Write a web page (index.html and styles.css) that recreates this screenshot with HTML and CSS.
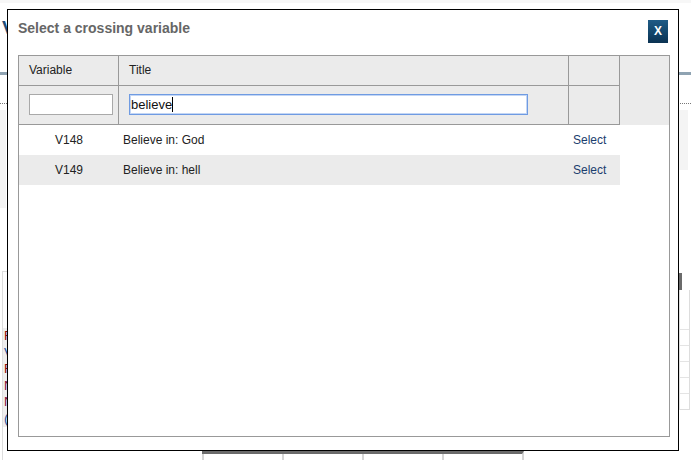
FILE: index.html
```html
<!DOCTYPE html>
<html lang="en">
<head>
<meta charset="utf-8">
<title>Select a crossing variable</title>
<link rel="stylesheet" href="styles.css">
</head>
<body>
<div class="page">
  <h1 class="page-title">V</h1>
  <div class="page-rule"></div>
  <div class="page-dots"></div>
  <div class="page-cols">
    <div class="col-left">
      <div class="soft-box tall"></div>
      <div class="legend">
        <div class="legend-list">
          <span class="lg red">R</span>
          <span class="lg blue">V</span>
          <span class="lg red">R</span>
          <span class="lg plum">N</span>
          <span class="lg plum">N</span>
          <span class="lg blue">(</span>
        </div>
      </div>
    </div>
    <div class="col-right">
      <div class="soft-box short"></div>
      <div class="dark-block"></div>
      <div class="mini-table">
        <div class="mini-row big"></div>
        <div class="mini-row"></div>
        <div class="mini-row"></div>
        <div class="mini-row"></div>
        <div class="mini-row"></div>
        <div class="mini-row"></div>
      </div>
    </div>
  </div>
  <div class="axis">
    <span class="tick"></span><span class="tick"></span><span class="tick"></span><span class="tick"></span>
  </div>
</div>

<div class="dialog">
  <div class="dialog-head">
    <h2 class="dialog-title">Select a crossing variable</h2>
    <button class="close-btn" type="button">X</button>
  </div>
  <div class="picker">
    <div class="picker-main">
      <div class="thead">
        <div class="th">Variable</div>
        <div class="th">Title</div>
        <div class="th"></div>
        <div class="th filter"><input class="filter-input small" type="text"></div>
        <div class="th filter"><span class="caret-wrap"><input class="filter-input wide" type="text" value="believe"></span></div>
        <div class="th filter"></div>
      </div>
      <div class="trow">
        <div class="td code">V148</div>
        <div class="td">Believe in: God</div>
        <div class="td"><a class="select-link" href="#">Select</a></div>
      </div>
      <div class="trow alt">
        <div class="td code">V149</div>
        <div class="td">Believe in: hell</div>
        <div class="td"><a class="select-link" href="#">Select</a></div>
      </div>
    </div>
    <div class="picker-gutter"></div>
  </div>
</div>
</body>
</html>
```
FILE: styles.css
```css
html, body {
  margin: 0;
  padding: 0;
  background: #fff;
  overflow: hidden;
}

body {
  font-family: "Liberation Sans", Arial, sans-serif;
  width: 691px;
  height: 460px;
}

/* ---------- background page ---------- */
.page {
  height: 460px;
  box-sizing: border-box;
  border-top: 3px solid #f7f7f7;
  display: flex;
  flex-direction: column;
}

.page-title {
  margin: 15px 0 0 2px;
  font-size: 19px;
  line-height: 20px;
  font-weight: bold;
  color: #1f4e79;
  white-space: nowrap;
}

.page-rule {
  margin-top: 34px;
  height: 3px;
  background: #8fa3b2;
}

.page-dots {
  margin-top: 28px;
  border-top: 1px dotted #777;
}

.page-cols {
  flex: none;
  height: 300px;
  margin-top: 6px;
  display: flex;
  justify-content: space-between;
  align-items: flex-start;
}

.col-left {
  width: 8px;
}

.col-right {
  width: 12px;
}

.soft-box {
  background: #f4f4f4;
}

.soft-box.tall {
  height: 98px;
  width: 6px;
}

.soft-box.short {
  height: 60px;
  width: 9px;
}

.legend {
  margin: 63px 0 0 2px;
  border-left: 1px solid #ddd;
  border-top: 1px solid #ddd;
  height: 200px;
  padding-top: 56px;
  box-sizing: border-box;
}

.legend-list {
  display: flex;
  flex-direction: column;
  background: #eee;
  overflow: hidden;
}

.lg {
  display: block;
  height: 16.5px;
  line-height: 16px;
  font-size: 13px;
  padding-left: 1px;
}

.lg.red { color: #8b0a0a; }
.lg.blue { color: #1f4e9a; }
.lg.plum { color: #7a0a3a; }

.dark-block {
  margin-top: 103px;
  width: 3px;
  height: 17px;
  background: #6b6b6b;
}

.mini-table {
  width: 9px;
  border: 1px solid #ddd;
  border-top: none;
}

.mini-row {
  height: 15px;
  border-top: 1px solid #e4e4e4;
}

.mini-row.big {
  height: 39px;
  border-top: none;
}

.axis {
  margin-top: auto;
  margin-left: 202px;
  width: 320px;
  border-top: 3px solid #6b6b6b;
  display: grid;
  grid-template-columns: repeat(4, 80px);
  height: 6px;
  border-right: 2px solid #d6d6d6;
}

.tick {
  border-left: 2px solid #d6d6d6;
}

/* ---------- dialog ---------- */
.dialog {
  position: absolute;
  left: 7px;
  top: 9px;
  width: 672px;
  height: 442px;
  box-sizing: border-box;
  border: 1px solid #000;
  background: #fff;
  padding: 0 8px 13px 10px;
  display: flex;
  flex-direction: column;
}

.dialog-head {
  height: 45px;
  flex: none;
  display: flex;
  justify-content: space-between;
  align-items: flex-start;
  padding-top: 10px;
  box-sizing: border-box;
}

.dialog-title {
  margin: 0;
  font-size: 14px;
  line-height: 16px;
  font-weight: bold;
  color: #666;
}

.close-btn {
  margin: 0 2px 0 0;
  padding: 0;
  width: 20px;
  height: 23px;
  border: none;
  background: linear-gradient(to bottom, #1f5b86 0%, #154a70 45%, #0b3252 100%);
  color: #fff;
  font-family: "Liberation Sans", Arial, sans-serif;
  font-size: 12px;
  font-weight: bold;
  line-height: 23px;
  text-align: center;
  cursor: pointer;
}

.picker {
  flex: 1;
  border: 1px solid #999;
  display: flex;
  align-items: flex-start;
  min-height: 0;
}

.picker-main {
  width: 601px;
  flex: none;
}

.picker-gutter {
  flex: 1;
  height: 69px;
  background: #ebebeb;
}

.thead {
  display: grid;
  grid-template-columns: 100px 450px 51px;
  grid-template-rows: 30px 39px;
}

.th {
  background: #ebebeb;
  border-right: 1px solid #999;
  border-bottom: 1px solid #999;
  box-sizing: border-box;
  padding-left: 10px;
  font-size: 12px;
  line-height: 29px;
  color: #222;
}

.th.filter {
  padding-top: 8px;
  line-height: normal;
}

.caret-wrap {
  position: relative;
  display: block;
  width: 399px;
}

.caret-wrap::after {
  content: "";
  position: absolute;
  left: 43px;
  top: 3px;
  width: 1px;
  height: 15px;
  background: #000;
}

.filter-input {
  display: block;
  box-sizing: border-box;
  height: 21px;
  margin: 0;
  padding: 0 1px;
  border: 1px solid #a9a9a9;
  background: #fff;
  font-family: "Liberation Sans", Arial, sans-serif;
  font-size: 13px;
  color: #111;
  outline: none;
}

.filter-input.small {
  width: 84px;
}

.filter-input.wide {
  width: 399px;
  border-color: #6f9be2;
  box-shadow: inset 0 0 0 1px #c3d6f5;
}

.trow {
  display: grid;
  grid-template-columns: 100px 450px 51px;
  height: 30px;
}

.trow.alt {
  background: #ebebeb;
}

.td {
  font-size: 12px;
  line-height: 31px;
  color: #222;
  padding-left: 4px;
  white-space: nowrap;
}

.td.code {
  padding-left: 0;
  text-align: center;
}

.select-link {
  color: #1b3e6e;
  text-decoration: none;
}
```
